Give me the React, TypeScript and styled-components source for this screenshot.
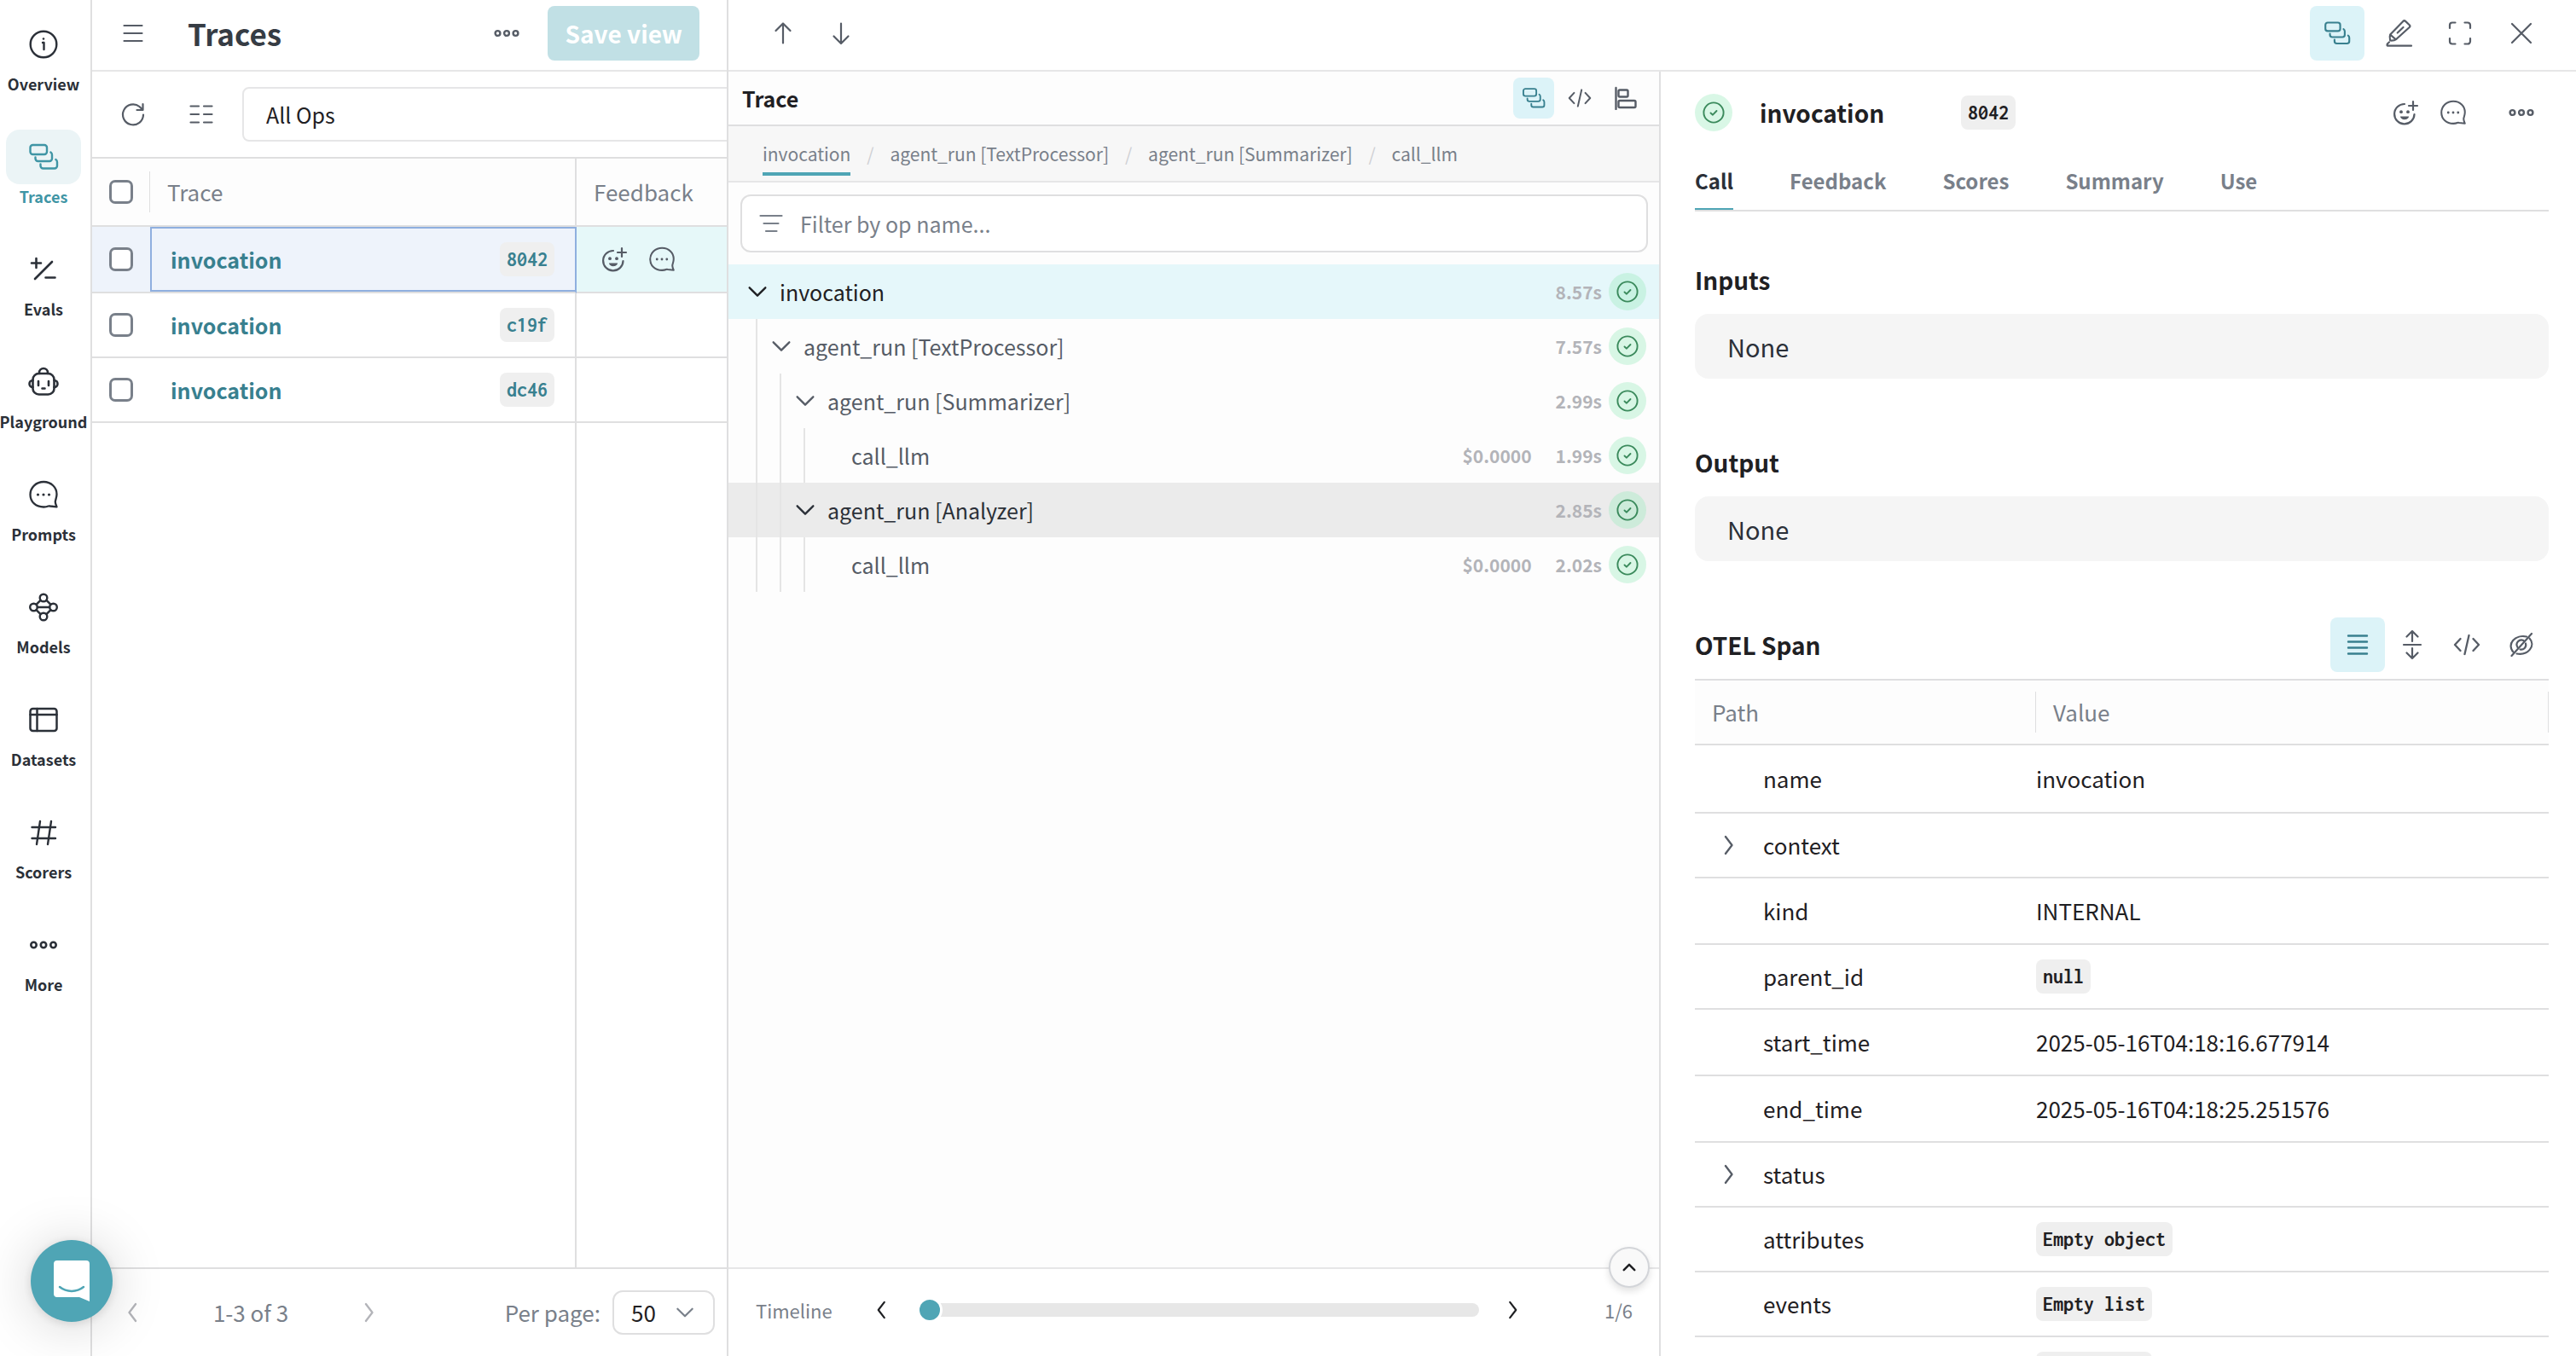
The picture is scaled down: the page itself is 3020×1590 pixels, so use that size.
import React from 'react';
import styled, { createGlobalStyle, css } from 'styled-components';

const c = {
  line: '#dfdfe0',
  lineSoft: '#e6e6e7',
  ink: '#1f2023',
  text: '#363c44',
  mid: '#565c66',
  muted: '#79808a',
  faint: '#b3b4b9',
  teal: '#4fa5b5',
  tealDark: '#38808f',
  tealBg: '#dcf3f8',
  panel: '#fdfdfd',
  chip: '#efefef',
};

const sans = `"Source Sans Pro", "Noto Sans CJK SC", "Noto Sans", sans-serif`;
const mono = `"Inconsolata", "Noto Sans Mono CJK SC", "Liberation Mono", monospace`;

const GlobalStyle = createGlobalStyle`
  * { box-sizing: border-box; }
  body { margin: 0; background: #fff; color: ${c.ink}; font-family: ${sans}; font-size: 25px; line-height: 40px; }
  button, input, select { font: inherit; color: inherit; }
  button { border: 0; padding: 0; background: none; cursor: pointer; }
  a { color: inherit; text-decoration: none; }
  h1, h2, h3, ul, ol { margin: 0; padding: 0; font-size: inherit; }
  ul, ol { list-style: none; }
  svg { display: block; flex: none; }
`;

/* ---------- icons ---------- */

type IconProps = { size?: number };

const Glyph = ({ size = 32, w = 2, box = 32, children }: IconProps & { w?: number; box?: number; children: React.ReactNode }) => (
  <svg
    width={size}
    height={size}
    viewBox={`0 0 ${box} ${box}`}
    fill="none"
    stroke="currentColor"
    strokeWidth={w}
    strokeLinecap="round"
    strokeLinejoin="round"
    aria-hidden="true"
  >
    {children}
  </svg>
);

const TracesIcon = ({ size = 36 }: IconProps) => (
  <Glyph size={size} box={36} w={2.4}>
    <rect x="2.5" y="4" width="19.5" height="11" rx="3" />
    <path d="M8.500 18.500v1.500a3 3 0 0 0 3 3h13.500a3 3 0 0 0 3-3v-4.500c0-1.300-.6-2.400-1.600-3" />
    <path d="M14.500 26.500v2a3 3 0 0 0 3 3h13.500a3 3 0 0 0 3-3v-4.500c0-1.300-.6-2.400-1.600-3" />
  </Glyph>
);
const InfoIcon = () => (
  <Glyph size={36} box={36} w={2.4}>
    <circle cx="18" cy="18" r="15.300" />
    <path d="M17 16h1.500v8" />
    <circle cx="18" cy="11.500" r="1.300" fill="currentColor" stroke="none" />
  </Glyph>
);
const EvalsIcon = () => (
  <Glyph size={36} box={36} w={2.6}>
    <path d="M4 10.500h11M9.500 5v11M28 9L8 29M20.500 27.500h11" />
  </Glyph>
);
const RobotIcon = () => (
  <Glyph size={38} box={38} w={2.6}>
    <rect x="6.500" y="9" width="25" height="24.500" rx="7" />
    <path d="M14 9V8a5 5 0 0 1 10 0v1" />
    <path d="M6.500 17c-2.500 0-4 1.800-4 4s1.500 4 4 4M31.500 17c2.500 0 4 1.800 4 4s-1.500 4-4 4" />
    <path d="M13 18v5M25 18v5M17.500 26.500h3" />
  </Glyph>
);
const ChatIcon = ({ size = 36 }: IconProps) => (
  <Glyph size={size} box={36} w={2.300}>
    <path d="M33.500 17.500C33.500 9.500 27 3 18.200 3S2.500 9.500 2.500 18s6.500 14.500 15.700 14.500c2 0 3.800-.3 5.300-1 .8-.3 1.500-.2 2.500 0l7.500.8c-.5-1.300-1.700-3.800-1.700-5.800 0-2.500 1.700-4.500 1.700-9z" />
    <g fill="currentColor" stroke="none">
      <circle cx="11.500" cy="18" r="1.600" />
      <circle cx="18" cy="18" r="1.600" />
      <circle cx="24.500" cy="18" r="1.600" />
    </g>
  </Glyph>
);
const ModelsIcon = () => (
  <Glyph size={36} box={36} w={2.400}>
    <circle cx="18" cy="7" r="4.300" />
    <circle cx="6.500" cy="18" r="4.300" />
    <circle cx="29.500" cy="18" r="4.300" />
    <circle cx="18" cy="29" r="4.300" />
    <path d="M10.800 18h14.400M14.500 9.800l-5 5M21.500 9.800l5 5M14.500 26.200l-5-5M21.500 26.200l5-5" />
  </Glyph>
);
const DatasetsIcon = () => (
  <Glyph size={36} box={36} w={2.500}>
    <rect x="2.500" y="5" width="31" height="26" rx="3" />
    <path d="M2.500 12h31M10.500 5v26" />
  </Glyph>
);
const HashIcon = () => (
  <Glyph size={36} box={36} w={2.400}>
    <path d="M4.500 12h27.500M4.500 25h27.500M14 5l-4 27M27 5l-4 27" />
  </Glyph>
);
const DotsIcon = () => (
  <Glyph size={36} box={36} w={2.600}>
    <circle cx="6.500" cy="18" r="3.200" />
    <circle cx="18" cy="18" r="3.200" />
    <circle cx="29.500" cy="18" r="3.200" />
  </Glyph>
);
const DotsSmallIcon = () => (
  <Glyph size={32} w={2.400}>
    <circle cx="5.500" cy="16" r="2.900" />
    <circle cx="16" cy="16" r="2.900" />
    <circle cx="26.500" cy="16" r="2.900" />
  </Glyph>
);
const MenuIcon = () => (
  <Glyph w={2.200}>
    <path d="M5.500 7h21M5.500 16h21M5.500 25h21" />
  </Glyph>
);
const ReloadIcon = () => (
  <Glyph w={2.200}>
    <path d="M28 16.500A12 12 0 1 1 23.500 7l3.500 3.500M27.500 4v7h-7" />
  </Glyph>
);
const ColumnsIcon = () => (
  <Glyph w={2.200}>
    <path d="M3.500 6.500h9.500M19 6.500h9.500M3.500 16h9.500M19 16h9.500M3.500 25.500h9.500M19 25.500h9.500" />
  </Glyph>
);
const SmileIcon = () => (
  <Glyph w={2.200}>
    <path d="M15 6A11.700 11.700 0 1 0 26.500 18" />
    <path d="M25 3v10M20 8h10" />
    <g fill="currentColor" stroke="none">
      <circle cx="11" cy="15.200" r="1.900" />
      <circle cx="19" cy="15.200" r="1.900" />
      <path d="M10 20.500h10c0 2-2.200 3.700-5 3.700s-5-1.700-5-3.700z" />
    </g>
  </Glyph>
);
const ArrowIcon = ({ down }: { down?: boolean }) => (
  <Glyph w={2.200}>
    <path d={down ? 'M16 4.500v23M7.500 19.500l8.500 8.500 8.500-8.500' : 'M16 27.500v-23M7.500 13L16 4.500 24.500 13'} />
  </Glyph>
);
const PencilIcon = () => (
  <Glyph size={36} box={36} w={2.200}>
    <path d="M8.200 19.500L23.300 3.900a2 2 0 0 1 2.800 0l4.600 4.300a2 2 0 0 1 0 2.800L15.500 24.800c-1.800 1.400-4.500 1.900-7.300 1.700-.6-2.500-.8-5 0-7zM8.200 19.500l6.600 5.800M23.500 11l-6.800 6.500" />
    <path d="M7 28.300c-1.500 1-2.600 2.300-2.500 3.700.1.500.5.700 1 .7H33" />
  </Glyph>
);
const ExpandIcon = () => (
  <Glyph w={2.200}>
    <path d="M4 10V6.500a3 3 0 0 1 3-3h3.500M21.500 3.500h3.500a3 3 0 0 1 3 3V10M28 22v3.500a3 3 0 0 1-3 3h-3.500M10.500 28.500H7a3 3 0 0 1-3-3V22" />
  </Glyph>
);
const CloseIcon = () => (
  <Glyph w={2.200}>
    <path d="M5 5l22 22M27 5L5 27" />
  </Glyph>
);
const CodeIcon = ({ size = 28 }: IconProps) => (
  <Glyph size={size} w={2.300}>
    <path d="M8.500 9L2 16l6.500 7M23.500 9l6.500 7-6.500 7M18.500 5l-5 22" />
  </Glyph>
);
const GanttIcon = () => (
  <Glyph size={28} box={28} w={2.400}>
    <path d="M2.500 2v25" />
    <rect x="5.500" y="4.500" width="11" height="8" rx="1.500" />
    <rect x="5.500" y="17" width="20" height="8" rx="1.500" />
  </Glyph>
);
const FilterIcon = () => (
  <Glyph w={2.200}>
    <path d="M3.500 7h25M7.500 16h17M10 25h12.500" />
  </Glyph>
);
const CheckIcon = () => (
  <Glyph size={26} box={26} w={1.900}>
    <circle cx="13" cy="13" r="11.600" />
    <path d="M9.500 13.500l2.500 2.200 4.500-4.700" />
  </Glyph>
);
const ListIcon = () => (
  <Glyph w={2.400}>
    <path d="M5 5.500h22M5 12.500h22M5 19.500h22M5 26.500h22" />
  </Glyph>
);
const SplitIcon = () => (
  <Glyph size={36} box={36} w={2.200}>
    <path d="M18 14V2M11.500 8.500L18 2l6.500 6.500M8 18h20M18 22v12M11.500 27.500L18 34l6.500-6.500" />
  </Glyph>
);
const HiddenIcon = () => (
  <Glyph w={2.200}>
    <path d="M28 3L4.500 29" />
    <path d="M22 6.500A14.500 11.500 0 0 0 6.500 24.500M25.500 8.500A14.500 11.500 0 0 1 10.500 26.500" />
    <path d="M18.500 11a5.500 5.500 0 0 0-7 8M21 14.500a5.500 5.500 0 0 1-6.500 7" />
  </Glyph>
);
const paths = { down: 'M4 8l8 8 8-8', up: 'M7 14.500l5-5 5 5', left: 'M15.500 3.500L9 12l6.500 8.500', right: 'M8.500 3.500L15 12l-6.500 8.500' };
const Chevron = ({ dir, size = 24 }: { dir: keyof typeof paths; size?: number }) => (
  <Glyph size={size} box={24} w={2}>
    <path d={paths[dir]} />
  </Glyph>
);

/* ---------- shared ---------- */

const IconButton = styled.button<{ $size?: number; $on?: boolean }>`
  display: flex;
  align-items: center;
  justify-content: center;
  flex: none;
  width: ${p => p.$size ?? 64}px;
  height: ${p => p.$size ?? 64}px;
  border-radius: 8px;
  color: ${p => (p.$on ? c.tealDark : c.mid)};
  background: ${p => (p.$on ? c.tealBg : 'transparent')};
`;

const Chip = styled.span<{ $teal?: boolean }>`
  display: inline-block;
  padding: 0 8px;
  border-radius: 8px;
  background: ${c.chip};
  color: ${p => (p.$teal ? c.tealDark : c.ink)};
  font: 700 24px/40px ${mono};
  white-space: nowrap;
`;

const StatusDot = styled.span`
  display: flex;
  align-items: center;
  justify-content: center;
  flex: none;
  width: 44px;
  height: 44px;
  border-radius: 50%;
  background: rgba(161, 235, 192, 0.4);
  color: #3b8a5c;
`;

const Grow = styled.span`
  flex: 1;
`;

/* ---------- frame ---------- */

const Shell = styled.div`
  display: grid;
  grid-template-columns: 108px minmax(0, 744fr) minmax(0, 2168fr);
  grid-template-rows: minmax(0, 1fr);
  height: 100vh;
  overflow: hidden;
`;

const Sidebar = styled.nav`
  padding: 20px 4px 0 0;
  border-right: 2px solid ${c.line};
`;
const SideList = styled.ul`
  display: flex;
  flex-direction: column;
  gap: 36px;
`;
const SideLink = styled.a<{ $on?: boolean }>`
  display: flex;
  flex-direction: column;
  align-items: center;
  height: 96px;
  color: ${p => (p.$on ? '#3f95a5' : '#2b3038')};
  font-size: 18px;
  font-weight: 600;
  line-height: 28px;
`;
const SideIcon = styled.span<{ $on?: boolean }>`
  display: flex;
  align-items: center;
  justify-content: center;
  width: 88px;
  height: 64px;
  border-radius: 16px;
  background: ${p => (p.$on ? '#ebf4f6' : 'transparent')};
`;

/* ---------- traces list ---------- */

const ListPane = styled.main`
  display: flex;
  flex-direction: column;
  min-width: 0;
  overflow: hidden;
`;
const ListHeader = styled.header`
  display: flex;
  align-items: center;
  height: 84px;
  padding: 0 32px 4px 16px;
  border-bottom: 2px solid ${c.lineSoft};
`;
const PageTitle = styled.h1`
  flex: 1;
  margin-left: 32px;
  color: ${c.text};
  font-size: 35px;
  font-weight: 600;
`;
const SaveButton = styled.button`
  height: 64px;
  margin-left: 16px;
  padding: 0 20px;
  border-radius: 8px;
  background: #c1e0e5;
  color: #fff;
  font-size: 28px;
  font-weight: 600;
`;
const Toolbar = styled.div`
  display: flex;
  align-items: center;
  gap: 16px;
  height: 102px;
  padding-left: 16px;
  border-bottom: 2px solid ${c.line};
`;
const OpSelect = styled.select`
  appearance: none;
  flex: 0 0 600px;
  height: 64px;
  padding: 0 26px;
  border: 2px solid ${c.lineSoft};
  border-radius: 8px;
  background: #fff;
  font-size: 25px;
`;

const Grid = styled.table`
  width: 100%;
  table-layout: fixed;
  border-collapse: separate;
  border-spacing: 0;
`;
const GridHead = styled.th<{ $w?: number; $edge?: boolean }>`
  width: ${p => (p.$w ? `${p.$w}px` : 'auto')};
  height: 80px;
  padding: 0 0 0 20px;
  border-bottom: 2px solid ${c.line};
  ${p => p.$edge && `border-right: 2px solid ${c.line};`}
  background: ${c.panel};
  color: ${c.muted};
  font-size: 26px;
  font-weight: 400;
  text-align: left;
`;
const HeadRule = styled.span`
  display: block;
  margin-left: -21px;
  padding-left: 20px;
  border-left: 1px solid ${c.line};
  line-height: 48px;
`;
const GridRow = styled.tr<{ $on?: boolean }>`
  height: ${p => (p.$on ? 78 : 76)}px;
  background: ${p => (p.$on ? '#e6f8f9' : '#fff')};
`;
const GridCell = styled.td<{ $edge?: boolean; $tint?: boolean; $focus?: boolean }>`
  padding: 0 0 0 20px;
  border-bottom: 2px solid ${c.line};
  ${p => p.$edge && `border-right: 2px solid ${c.line};`}
  ${p => p.$tint && 'background: #eef3fb;'}
  ${p =>
    p.$focus &&
    css`
      border-right-color: #8fafdf;
      box-shadow: inset 2px 0 #8fafdf, inset 0 2px #8fafdf, inset 0 -2px #8fafdf;
    `}
`;
const TraceCell = styled.div`
  display: flex;
  align-items: center;
  justify-content: space-between;
  padding: 0 24px 0 4px;
  color: ${c.tealDark};
  font-weight: 600;
`;
const Tick = styled.input`
  appearance: none;
  display: block;
  width: 28px;
  height: 28px;
  margin: 0;
  border: 3px solid ${c.muted};
  border-radius: 7px;
  background: #fff;
`;
const Reactions = styled.div`
  display: flex;
  gap: 24px;
  padding-left: 8px;
`;
const GridRest = styled.div`
  flex: 1;
  width: 568px;
  border-right: 2px solid ${c.line};
`;
const ListFooter = styled.footer`
  display: flex;
  align-items: center;
  height: 104px;
  padding: 0 14px 0 31px;
  border-top: 2px solid ${c.line};
  color: ${c.muted};
  font-size: 26px;
`;
const PageButton = styled(IconButton)`
  color: ${c.faint};
`;
const PageRange = styled.span`
  width: 246px;
  text-align: center;
`;
const PerPage = styled.label`
  display: flex;
  align-items: center;
  gap: 14px;
`;
const SelectBox = styled.span`
  display: grid;
  align-items: center;
  width: 120px;
  > * { grid-area: 1 / 1; }
  > svg { justify-self: end; margin-right: 22px; pointer-events: none; }
`;
const SizeSelect = styled.select`
  appearance: none;
  width: 100%;
  height: 52px;
  padding: 0 20px;
  border: 2px solid ${c.line};
  border-radius: 12px;
  background: #fff;
  color: ${c.ink};
`;

/* ---------- drawer ---------- */

const Drawer = styled.aside`
  display: flex;
  flex-direction: column;
  min-width: 0;
  border-left: 2px solid ${c.line};
  background: #fff;
`;
const DrawerBar = styled.header`
  display: flex;
  align-items: center;
  justify-content: space-between;
  height: 84px;
  padding: 0 32px 4px;
  border-bottom: 2px solid ${c.lineSoft};
`;
const BarGroup = styled.div<{ $gap: number }>`
  display: flex;
  gap: ${p => p.$gap}px;
`;
const DrawerBody = styled.div`
  display: grid;
  grid-template-columns: minmax(0, 1093fr) minmax(0, 1073fr);
  grid-template-rows: minmax(0, 1fr);
  flex: 1;
  min-height: 0;
`;

const TracePanel = styled.section`
  display: flex;
  flex-direction: column;
  border-right: 2px solid ${c.line};
  background: ${c.panel};
`;
const TraceBar = styled.div`
  display: flex;
  align-items: center;
  gap: 6px;
  height: 64px;
  padding: 0 15px 0 16px;
  border-bottom: 2px solid ${c.line};
`;
const PanelTitle = styled.h2`
  flex: 1;
  font-weight: 600;
`;
const Crumbs = styled.ol`
  display: flex;
  align-items: flex-end;
  height: 66px;
  padding: 0 40px 6px;
  border-bottom: 2px solid ${c.lineSoft};
  background: #f7f7f7;
  color: ${c.muted};
  font-size: 21px;
  line-height: 44px;

  li { display: flex; }
  li + li::before { content: '/'; width: 46px; color: #cfd0d4; text-align: center; }
`;
const Crumb = styled.a<{ $on?: boolean }>`
  display: block;
  border-bottom: 4px solid ${p => (p.$on ? c.teal : 'transparent')};
`;
const FilterBox = styled.label`
  display: flex;
  align-items: center;
  gap: 18px;
  height: 68px;
  margin: 14px 13px 14px 14px;
  padding: 0 18px;
  border: 2px solid ${c.line};
  border-radius: 12px;
  background: #fff;
  color: ${c.muted};
`;
const FilterInput = styled.input`
  flex: 1;
  border: 0;
  padding: 0;
  outline: 0;
  background: none;
  &::placeholder { color: ${c.muted}; opacity: 1; }
`;
const TreeRow = styled.button<{ $tone?: 'on' | 'hover' }>`
  display: flex;
  align-items: center;
  width: 100%;
  height: 64px;
  padding: 0 15px 0 6px;
  background: ${p => (p.$tone === 'on' ? '#e5f7fa' : p.$tone === 'hover' ? '#ebebeb' : 'transparent')};
  color: ${p => (p.$tone === 'on' ? c.ink : p.$tone === 'hover' ? '#2b3038' : c.mid)};
  text-align: left;
`;
const Guide = styled.span`
  width: 28px;
  height: 100%;
  border-right: 2px solid #e5e5e5;
`;
const Twist = styled.span`
  display: flex;
  justify-content: center;
  width: 28px;
  margin: 0 12px 0 14px;
`;
const Metric = styled.span<{ $last?: boolean }>`
  margin-right: ${p => (p.$last ? 8 : 28)}px;
  color: ${c.faint};
  font-size: 21px;
  font-weight: 600;
`;
const TreeFoot = styled.footer`
  position: relative;
  display: flex;
  align-items: center;
  height: 104px;
  padding: 0 31px 6px 32px;
  border-top: 2px solid ${c.lineSoft};
  background: #fff;
  color: ${c.muted};
  font-size: 22px;
`;
const TimelineLabel = styled.label`
  width: 131px;
`;
const StepButton = styled(IconButton)`
  color: ${c.ink};
`;
const Slider = styled.input`
  appearance: none;
  flex: 1;
  height: 24px;
  margin: 0 24px 0 29px;
  background: none;
  &::-webkit-slider-runnable-track { height: 16px; border-radius: 8px; background: #e7e7e7; }
  &::-webkit-slider-thumb {
    appearance: none;
    width: 24px;
    height: 24px;
    margin-top: -4px;
    border-radius: 50%;
    background: ${c.teal};
    box-shadow: 0 0 0 3px #fff;
  }
`;
const Count = styled.span`
  width: 124px;
  text-align: right;
`;
const Collapse = styled.button`
  position: absolute;
  top: -26px;
  right: 11px;
  display: flex;
  align-items: center;
  justify-content: center;
  width: 48px;
  height: 48px;
  border: 2px solid #d3d5d9;
  border-radius: 50%;
  background: #f9f9f9;
  color: ${c.ink};
  box-shadow: 0 4px 8px rgba(0, 0, 0, 0.12);
`;

/* ---------- details ---------- */

const Details = styled.section`
  display: flex;
  flex-direction: column;
  min-height: 0;
  padding: 0 32px 0 40px;
  overflow: hidden;
`;
const CallHeader = styled.header`
  display: flex;
  flex: none;
  align-items: center;
  height: 96px;
`;
const CallTitle = styled.h2`
  margin: 0 90px 0 32px;
  font-size: 28px;
  font-weight: 600;
`;
const CallActions = styled.div`
  display: flex;
  flex: 1;
  align-items: center;
  justify-content: flex-end;
`;
const Reacts = styled.div`
  display: flex;
  margin-right: 20px;
`;
const Tabs = styled.div`
  display: flex;
  flex: none;
  gap: 66px;
  border-bottom: 2px solid ${c.line};
`;
const Tab = styled.button<{ $on?: boolean }>`
  border-bottom: 2px solid ${p => (p.$on ? c.teal : 'transparent')};
  color: ${p => (p.$on ? '#2b3038' : c.muted)};
  font-size: 24px;
  font-weight: 600;
  line-height: 64px;
`;
const Sections = styled.div`
  display: flex;
  flex-direction: column;
  gap: 66px;
  padding-top: 48px;
`;
const SectionHead = styled.div`
  display: flex;
  align-items: center;
  height: 64px;
  margin-bottom: 8px;
`;
const SectionTitle = styled.h3`
  flex: 1;
  font-size: 28px;
  font-weight: 600;
`;
const ValueBox = styled.div`
  height: 76px;
  padding: 0 38px;
  border-radius: 16px;
  background: #f5f5f5;
  color: #2b3038;
  font-size: 29px;
  line-height: 76px;
`;
const SpanTable = styled.table`
  width: 100%;
  table-layout: fixed;
  border-collapse: separate;
  border-spacing: 0;
  border-top: 2px solid ${c.line};
  font-size: 26px;
`;
const SpanHead = styled.th<{ $w?: number }>`
  width: ${p => (p.$w ? `${p.$w}px` : 'auto')};
  height: 76px;
  padding: 0;
  border-bottom: 2px solid ${c.line};
  background: ${c.panel};
  color: ${c.muted};
  font-weight: 400;
  text-align: left;

  span {
    display: block;
    padding-left: 20px;
    border-right: 1px solid ${c.line};
    line-height: 48px;
  }
`;
const SpanRow = styled.tr<{ $h: number }>`
  height: ${p => p.$h}px;
`;
const SpanCell = styled.td`
  padding: 0;
  border-bottom: 2px solid ${c.line};
  white-space: nowrap;
`;
const PathCell = styled.div`
  display: flex;
  align-items: center;
`;
const PathTwist = styled.span`
  display: flex;
  justify-content: center;
  width: 80px;
  color: ${c.mid};
`;

const Launcher = styled.button`
  position: fixed;
  left: 36px;
  bottom: 40px;
  display: flex;
  align-items: center;
  justify-content: center;
  width: 96px;
  height: 96px;
  border-radius: 50%;
  background: ${c.teal};
  box-shadow: 0 2px 12px rgba(0, 0, 0, 0.12), 0 4px 64px rgba(0, 0, 0, 0.18);
`;

/* ---------- data ---------- */

const nav = [
  { label: 'Overview', icon: <InfoIcon /> },
  { label: 'Traces', icon: <TracesIcon />, on: true },
  { label: 'Evals', icon: <EvalsIcon /> },
  { label: 'Playground', icon: <RobotIcon /> },
  { label: 'Prompts', icon: <ChatIcon /> },
  { label: 'Models', icon: <ModelsIcon /> },
  { label: 'Datasets', icon: <DatasetsIcon /> },
  { label: 'Scorers', icon: <HashIcon /> },
  { label: 'More', icon: <DotsIcon /> },
];

const traces = [{ id: '8042', on: true }, { id: 'c19f' }, { id: 'dc46' }];

const crumbs = ['invocation', 'agent_run [TextProcessor]', 'agent_run [Summarizer]', 'call_llm'];

type Node = { name: string; depth: number; time: string; cost?: string; tone?: 'on' | 'hover'; leaf?: boolean };
const tree: Node[] = [
  { name: 'invocation', depth: 0, time: '8.57s', tone: 'on' },
  { name: 'agent_run [TextProcessor]', depth: 1, time: '7.57s' },
  { name: 'agent_run [Summarizer]', depth: 2, time: '2.99s' },
  { name: 'call_llm', depth: 3, time: '1.99s', cost: '$0.0000', leaf: true },
  { name: 'agent_run [Analyzer]', depth: 2, time: '2.85s', tone: 'hover' },
  { name: 'call_llm', depth: 3, time: '2.02s', cost: '$0.0000', leaf: true },
];

type Attr = { path: string; value?: string; chip?: string; open?: boolean };
const attrs: Attr[] = [
  { path: 'name', value: 'invocation' },
  { path: 'context', open: true },
  { path: 'kind', value: 'INTERNAL' },
  { path: 'parent_id', chip: 'null' },
  { path: 'start_time', value: '2025-05-16T04:18:16.677914' },
  { path: 'end_time', value: '2025-05-16T04:18:25.251576' },
  { path: 'status', open: true },
  { path: 'attributes', chip: 'Empty object' },
  { path: 'events', chip: 'Empty list' },
  { path: 'links', chip: 'Empty list' },
];

/* ---------- views ---------- */

function TraceList() {
  return (
    <ListPane>
      <ListHeader>
        <IconButton aria-label="Menu"><MenuIcon /></IconButton>
        <PageTitle>Traces</PageTitle>
        <IconButton aria-label="More options"><DotsSmallIcon /></IconButton>
        <SaveButton type="button">Save view</SaveButton>
      </ListHeader>
      <Toolbar>
        <IconButton aria-label="Refresh"><ReloadIcon /></IconButton>
        <IconButton aria-label="Columns"><ColumnsIcon /></IconButton>
        <OpSelect aria-label="Op filter"><option>All Ops</option></OpSelect>
      </Toolbar>
      <Grid>
        <thead>
          <tr>
            <GridHead $w={68}><Tick type="checkbox" aria-label="Select all" /></GridHead>
            <GridHead $w={500} $edge><HeadRule>Trace</HeadRule></GridHead>
            <GridHead>Feedback</GridHead>
          </tr>
        </thead>
        <tbody>
          {traces.map(t => (
            <GridRow key={t.id} $on={t.on}>
              <GridCell $tint={t.on}><Tick type="checkbox" aria-label={`Select ${t.id}`} /></GridCell>
              <GridCell $edge $tint={t.on} $focus={t.on}>
                <TraceCell><a href="#trace">invocation</a><Chip $teal>{t.id}</Chip></TraceCell>
              </GridCell>
              <GridCell>
                {t.on && (
                  <Reactions>
                    <IconButton $size={32} aria-label="Add reaction"><SmileIcon /></IconButton>
                    <IconButton $size={32} aria-label="Add note"><ChatIcon size={32} /></IconButton>
                  </Reactions>
                )}
              </GridCell>
            </GridRow>
          ))}
        </tbody>
      </Grid>
      <GridRest />
      <ListFooter>
        <PageButton $size={32} aria-label="Previous page"><Chevron dir="left" size={28} /></PageButton>
        <PageRange>1-3 of 3</PageRange>
        <PageButton $size={32} aria-label="Next page"><Chevron dir="right" size={28} /></PageButton>
        <Grow />
        <PerPage>
          Per page:
          <SelectBox>
            <SizeSelect><option>50</option></SizeSelect>
            <Chevron dir="down" size={26} />
          </SelectBox>
        </PerPage>
      </ListFooter>
    </ListPane>
  );
}

function TraceTree() {
  return (
    <TracePanel>
      <TraceBar>
        <PanelTitle>Trace</PanelTitle>
        <IconButton $size={48} $on aria-label="Tree view"><TracesIcon size={28} /></IconButton>
        <IconButton $size={48} aria-label="Code view"><CodeIcon /></IconButton>
        <IconButton $size={48} aria-label="Flame view"><GanttIcon /></IconButton>
      </TraceBar>
      <Crumbs>
        {crumbs.map((x, i) => (
          <li key={x}><Crumb href="#crumb" $on={i === 0}>{x}</Crumb></li>
        ))}
      </Crumbs>
      <FilterBox>
        <FilterIcon />
        <FilterInput placeholder="Filter by op name..." aria-label="Filter by op name" />
      </FilterBox>
      <ul>
        {tree.map((n, i) => (
          <li key={i}>
            <TreeRow $tone={n.tone}>
              {Array.from({ length: n.depth }, (_, g) => <Guide key={g} />)}
              <Twist>{!n.leaf && <Chevron dir="down" size={28} />}</Twist>
              {n.name}
              <Grow />
              {n.cost && <Metric>{n.cost}</Metric>}
              <Metric $last>{n.time}</Metric>
              <StatusDot><CheckIcon /></StatusDot>
            </TreeRow>
          </li>
        ))}
      </ul>
      <Grow />
      <TreeFoot>
        <TimelineLabel htmlFor="timeline">Timeline</TimelineLabel>
        <StepButton $size={32} aria-label="Previous step"><Chevron dir="left" size={26} /></StepButton>
        <Slider id="timeline" type="range" min={1} max={6} defaultValue={1} />
        <StepButton $size={32} aria-label="Next step"><Chevron dir="right" size={26} /></StepButton>
        <Count>1/6</Count>
        <Collapse aria-label="Expand timeline"><Chevron dir="up" size={30} /></Collapse>
      </TreeFoot>
    </TracePanel>
  );
}

function CallDetails() {
  return (
    <Details>
      <CallHeader>
        <StatusDot><CheckIcon /></StatusDot>
        <CallTitle>invocation</CallTitle>
        <Chip>8042</Chip>
        <CallActions>
          <Reacts>
            <IconButton $size={56} aria-label="Add reaction"><SmileIcon /></IconButton>
            <IconButton $size={56} aria-label="Add note"><ChatIcon size={32} /></IconButton>
          </Reacts>
          <IconButton aria-label="More options"><DotsSmallIcon /></IconButton>
        </CallActions>
      </CallHeader>
      <Tabs role="tablist">
        {['Call', 'Feedback', 'Scores', 'Summary', 'Use'].map((t, i) => (
          <Tab key={t} role="tab" $on={i === 0}>{t}</Tab>
        ))}
      </Tabs>
      <Sections>
        <div>
          <SectionHead><SectionTitle>Inputs</SectionTitle></SectionHead>
          <ValueBox>None</ValueBox>
        </div>
        <div>
          <SectionHead><SectionTitle>Output</SectionTitle></SectionHead>
          <ValueBox>None</ValueBox>
        </div>
        <div>
          <SectionHead>
            <SectionTitle>OTEL Span</SectionTitle>
            <IconButton $on aria-label="Collapse all"><ListIcon /></IconButton>
            <IconButton aria-label="Expand all"><SplitIcon /></IconButton>
            <IconButton aria-label="View as code"><CodeIcon size={32} /></IconButton>
            <IconButton aria-label="Hide"><HiddenIcon /></IconButton>
          </SectionHead>
          <SpanTable>
            <thead>
              <tr>
                <SpanHead $w={400}><span>Path</span></SpanHead>
                <SpanHead><span>Value</span></SpanHead>
              </tr>
            </thead>
            <tbody>
              {attrs.map((a, i) => (
                <SpanRow key={a.path} $h={(a.value ? 78 : 76) + (i === 0 ? 2 : 0)}>
                  <SpanCell>
                    <PathCell>
                      <PathTwist>{a.open && <Chevron dir="right" size={28} />}</PathTwist>
                      {a.path}
                    </PathCell>
                  </SpanCell>
                  <SpanCell>{a.chip ? <PathCell><Chip>{a.chip}</Chip></PathCell> : a.value}</SpanCell>
                </SpanRow>
              ))}
            </tbody>
          </SpanTable>
        </div>
      </Sections>
    </Details>
  );
}

export default function App() {
  return (
    <>
      <GlobalStyle />
      <Shell>
        <Sidebar>
          <SideList>
            {nav.map(n => (
              <li key={n.label}>
                <SideLink href="#nav" $on={n.on}>
                  <SideIcon $on={n.on}>{n.icon}</SideIcon>
                  {n.label}
                </SideLink>
              </li>
            ))}
          </SideList>
        </Sidebar>
        <TraceList />
        <Drawer>
          <DrawerBar>
            <BarGroup $gap={4}>
              <IconButton aria-label="Previous call"><ArrowIcon /></IconButton>
              <IconButton aria-label="Next call"><ArrowIcon down /></IconButton>
            </BarGroup>
            <BarGroup $gap={8}>
              <IconButton $on aria-label="Show tree"><TracesIcon size={32} /></IconButton>
              <IconButton aria-label="Annotate"><PencilIcon /></IconButton>
              <IconButton aria-label="Full screen"><ExpandIcon /></IconButton>
              <IconButton aria-label="Close"><CloseIcon /></IconButton>
            </BarGroup>
          </DrawerBar>
          <DrawerBody>
            <TraceTree />
            <CallDetails />
          </DrawerBody>
        </Drawer>
      </Shell>
      <Launcher aria-label="Open chat">
        <svg width="44" height="50" viewBox="0 0 44 50" aria-hidden="true">
          <path d="M5 1h34a4 4 0 0 1 4 4v44l-12-5H5a4 4 0 0 1-4-4V5a4 4 0 0 1 4-4z" fill="#fff" />
          <path d="M8 32c8 6.500 20 6.500 28 0" fill="none" stroke={c.teal} strokeWidth="2.500" strokeLinecap="round" />
        </svg>
      </Launcher>
    </>
  );
}
